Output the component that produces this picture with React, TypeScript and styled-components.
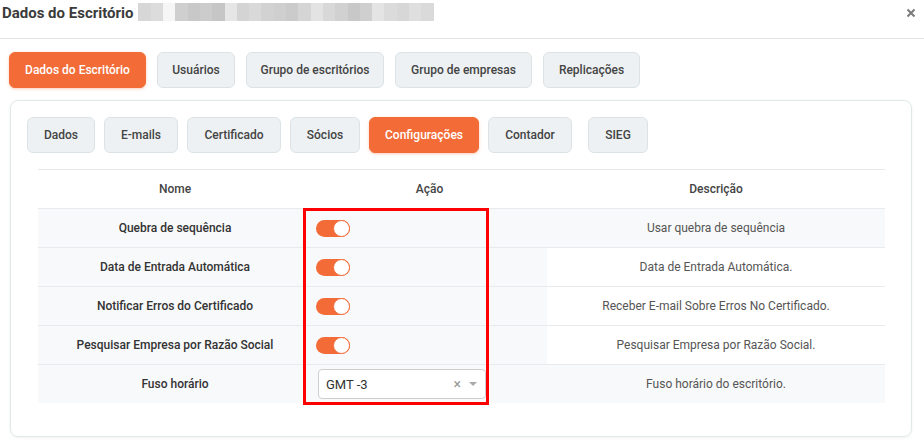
import React from "react";
import styled, { createGlobalStyle } from "styled-components";

const Global = createGlobalStyle`
  html, body { margin: 0; padding: 0; background: #fff; }
  body { font-family: Roboto, "Liberation Sans", Arial, sans-serif; color: #333; }
  * { box-sizing: border-box; }
`;

const ORANGE = "#f36c38";

const Page = styled.div`
  width: 924px;
  height: 448px;
  overflow: hidden;
  background: #fff;
`;

const Header = styled.header`
  height: 39px;
  border-bottom: 1px solid #e4e4e4;
  display: flex;
  align-items: flex-start;
  padding: 3px 8px 0 2px;
`;

const Title = styled.h1`
  margin: 0;
  font-size: 15px;
  font-weight: 700;
  color: #3b3b3b;
  line-height: 20px;
  white-space: nowrap;
`;

const Mosaic = styled.div`
  display: flex;
  margin-left: 5px;
  height: 18px;
`;

const Pixel = styled.span<{ $c: string }>`
  display: block;
  width: 12.3px;
  height: 18px;
  background: ${(p) => p.$c};
`;

const Close = styled.button`
  margin-left: auto;
  margin-top: 5px;
  border: 0;
  background: none;
  padding: 0;
  width: 10px;
  height: 10px;
  display: flex;
  cursor: pointer;
`;

const TabBar = styled.nav<{ $gap: number }>`
  display: flex;
  gap: ${(p) => p.$gap}px;
`;

const TopTabs = styled(TabBar)`
  margin: 13px 0 0 9px;
`;

const Tab = styled.button<{ $active?: boolean; $w: number; $extra?: number }>`
  width: ${(p) => p.$w}px;
  height: 36px;
  margin-left: ${(p) => p.$extra || 0}px;
  border-radius: 6px;
  border: 1px solid ${(p) => (p.$active ? ORANGE : "#dce3e6")};
  background: ${(p) => (p.$active ? ORANGE : "#edf1f3")};
  color: ${(p) => (p.$active ? "#fff" : "#444")};
  font-family: Roboto, "Liberation Sans", sans-serif;
  font-size: 12px;
  font-weight: 500;
  padding: 0;
  white-space: nowrap;
  box-shadow: ${(p) => (p.$active ? "0 1px 3px rgba(243,108,56,0.35)" : "none")};
`;

const Card = styled.section`
  margin: 12px 12px 0 10px;
  border: 1px solid #e0e9ea;
  border-radius: 8px;
  box-shadow: 0 1px 3px rgba(0, 0, 0, 0.06);
  padding: 16px 26px 33px 16px;
`;

const TableWrap = styled.div`
  position: relative;
  margin: 16px 0 0 11px;
  border-top: 1px solid #e6e8ea;
`;

const Grid = styled.div`
  display: grid;
  grid-template-columns: 274px 235px 1fr;
`;

const HeadCell = styled.div`
  height: 38px;
  display: flex;
  align-items: center;
  justify-content: center;
  font-size: 12px;
  font-weight: 500;
  color: #444;
`;

const Cell = styled.div<{ $bg: string; $align?: "left" | "center"; $bold?: boolean }>`
  height: 39px;
  border-top: 1px solid #e8ebee;
  background: ${(p) => p.$bg};
  display: flex;
  align-items: center;
  justify-content: ${(p) => (p.$align === "left" ? "flex-start" : "center")};
  padding-left: ${(p) => (p.$align === "left" ? "4px" : "0")};
  font-size: 12px;
  font-weight: ${(p) => (p.$bold ? 500 : 400)};
  color: ${(p) => (p.$bold ? "#333" : "#555")};
`;

const Toggle = styled.span`
  position: relative;
  display: inline-block;
  width: 34px;
  height: 17px;
  border-radius: 9px;
  background: ${ORANGE};
`;

const Knob = styled.span`
  position: absolute;
  right: 0;
  top: 0;
  width: 17px;
  height: 17px;
  border-radius: 50%;
  background: #fff;
  border: 1.5px solid ${ORANGE};
`;

const Select = styled.div`
  margin-left: 2px;
  width: 168px;
  height: 30px;
  border: 1px solid #cfcfcf;
  border-radius: 4px;
  background: #fff;
  display: flex;
  align-items: center;
  padding: 0 8px 0 7px;
  font-size: 13px;
  color: #333;
`;

const SelectValue = styled.span`
  flex: 1;
`;

const Clear = styled.span`
  color: #999;
  font-size: 14px;
  margin-right: 8px;
  line-height: 1;
`;

const Caret = styled.span`
  width: 0;
  height: 0;
  border-left: 4px solid transparent;
  border-right: 4px solid transparent;
  border-top: 4px solid #aaa;
`;

const Highlight = styled.div`
  position: absolute;
  left: 265px;
  top: 38px;
  width: 186px;
  height: 197px;
  border: 3px solid #ff0000;
  pointer-events: none;
`;

const mosaic = [
  "#d7d7d7", "#dcdcdc", "#f6f6f6", "#cfcfcf", "#c8c8c8", "#cccccc", "#c6c6c6", "#e6e6e6",
  "#d4d4d4", "#d9d9d9", "#d2d2d2", "#cfcfcf", "#cbcbcb", "#d5d5d5", "#e3e3e3", "#d8d8d8",
  "#d1d1d1", "#c8c8c8", "#cfcfcf", "#e4e4e4", "#dbdbdb", "#d7d7d7", "#dfdfdf", "#dadada",
];

const topTabs = [
  { label: "Dados do Escritório", w: 137, active: true },
  { label: "Usuários", w: 78 },
  { label: "Grupo de escritórios", w: 138 },
  { label: "Grupo de empresas", w: 137 },
  { label: "Replicações", w: 97 },
];

const innerTabs = [
  { label: "Dados", w: 68 },
  { label: "E-mails", w: 74 },
  { label: "Certificado", w: 94 },
  { label: "Sócios", w: 70 },
  { label: "Configurações", w: 110, active: true },
  { label: "Contador", w: 84 },
  { label: "SIEG", w: 60, extra: 7 },
];

type Row = { name: string; desc: string; kind: "toggle" | "select"; full: boolean };

const rows: Row[] = [
  { name: "Quebra de sequência", desc: "Usar quebra de sequência", kind: "toggle", full: true },
  { name: "Data de Entrada Automática", desc: "Data de Entrada Automática.", kind: "toggle", full: false },
  { name: "Notificar Erros do Certificado", desc: "Receber E-mail Sobre Erros No Certificado.", kind: "toggle", full: false },
  { name: "Pesquisar Empresa por Razão Social", desc: "Pesquisar Empresa por Razão Social.", kind: "toggle", full: false },
  { name: "Fuso horário", desc: "Fuso horário do escritório.", kind: "select", full: true },
];

const GRAY = "#f8f9fa";

export default function App() {
  return (
    <Page>
      <Global />
      <Header>
        <Title>Dados do Escritório</Title>
        <Mosaic>
          {mosaic.map((c, i) => (
            <Pixel key={i} $c={c} />
          ))}
        </Mosaic>
        <Close aria-label="Fechar">
          <svg width="10" height="10" viewBox="0 0 10 10">
            <path d="M1.5 1.5 L8.5 8.5 M8.5 1.5 L1.5 8.5" stroke="#7a7a7a" strokeWidth="2" />
          </svg>
        </Close>
      </Header>

      <TopTabs $gap={11}>
        {topTabs.map((t) => (
          <Tab key={t.label} $w={t.w} $active={t.active}>
            {t.label}
          </Tab>
        ))}
      </TopTabs>

      <Card>
        <TabBar $gap={9}>
          {innerTabs.map((t) => (
            <Tab key={t.label} $w={t.w} $active={t.active} $extra={t.extra}>
              {t.label}
            </Tab>
          ))}
        </TabBar>

        <TableWrap>
          <Grid>
            <HeadCell>Nome</HeadCell>
            <HeadCell>Ação</HeadCell>
            <HeadCell>Descrição</HeadCell>
            {rows.map((r) => (
              <React.Fragment key={r.name}>
                <Cell $bg={GRAY} $bold>
                  {r.name}
                </Cell>
                <Cell $bg={GRAY} $align="left">
                  {r.kind === "toggle" ? (
                    <Toggle>
                      <Knob />
                    </Toggle>
                  ) : (
                    <Select>
                      <SelectValue>GMT -3</SelectValue>
                      <Clear>×</Clear>
                      <Caret />
                    </Select>
                  )}
                </Cell>
                <Cell $bg={r.full ? GRAY : "#fff"}>{r.desc}</Cell>
              </React.Fragment>
            ))}
          </Grid>
          <Highlight />
        </TableWrap>
      </Card>
    </Page>
  );
}
